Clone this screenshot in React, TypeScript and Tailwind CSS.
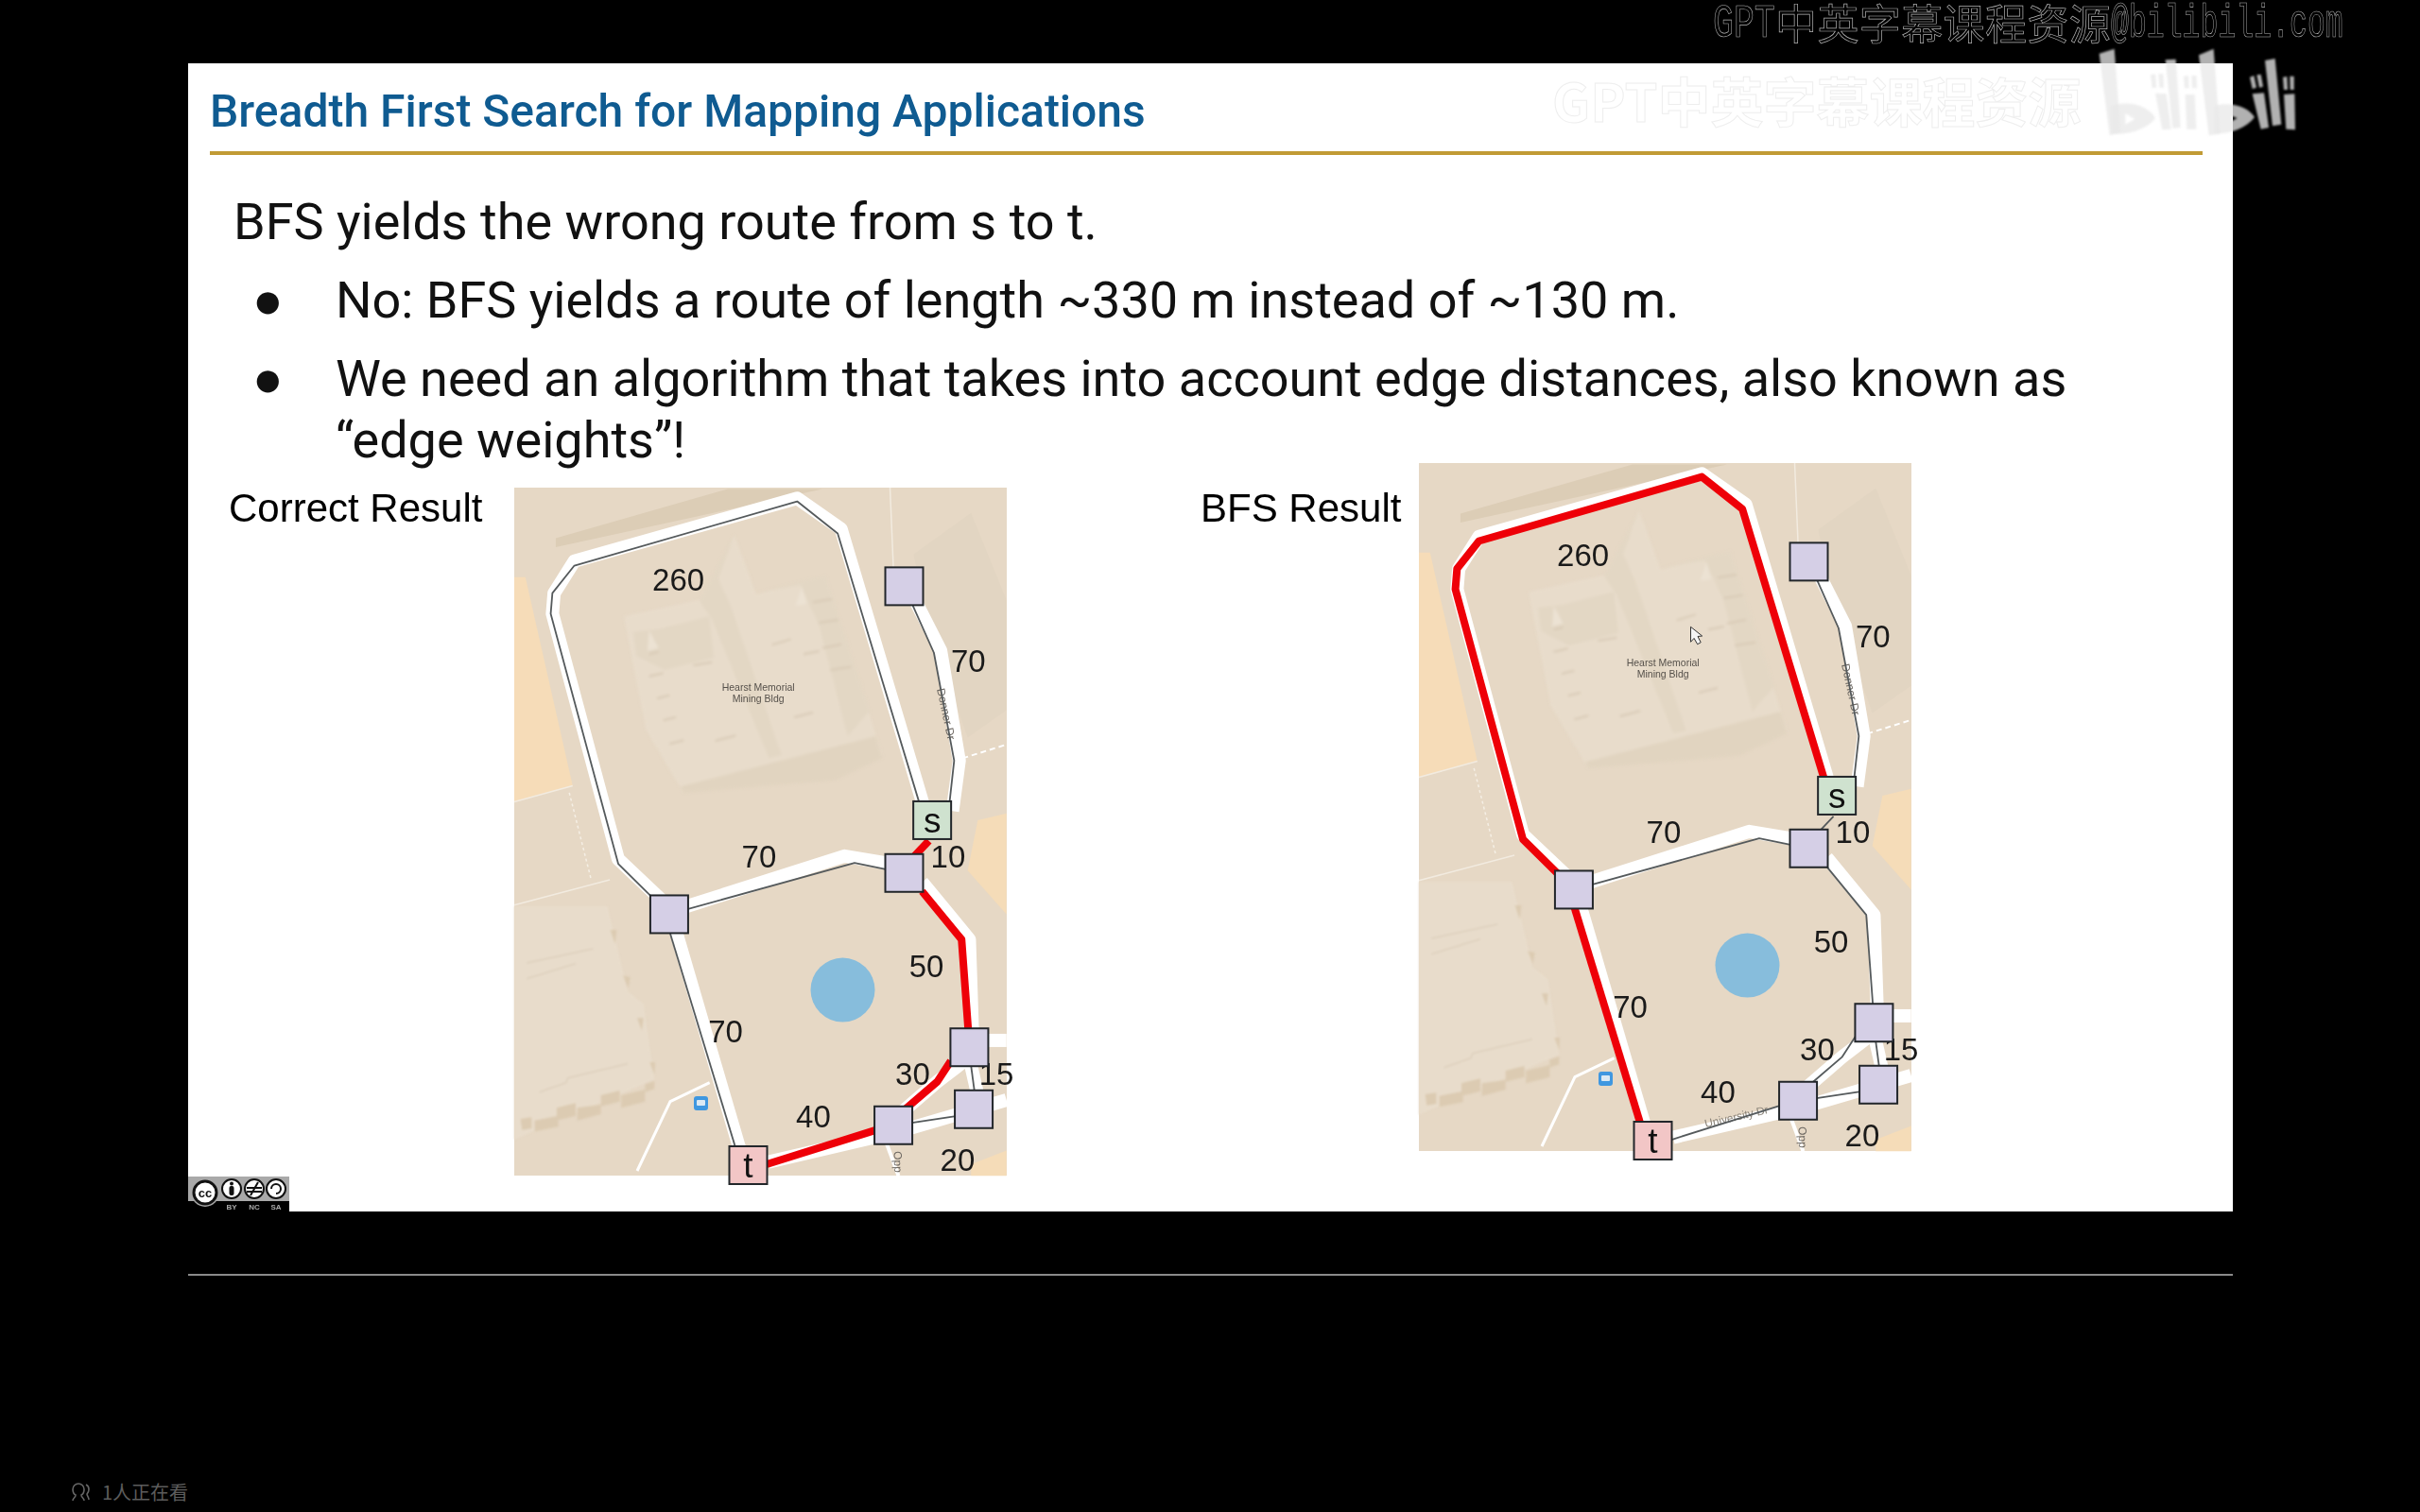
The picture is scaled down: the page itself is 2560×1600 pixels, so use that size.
import React from 'react';

type Pt = [number, number];

// map points were read off a crop, so convert them to px here
const X = (x: number) => (x - 67) / 2.8;
const Y = (y: number) => (y - 35) / 2.06;
const pts = (list: Pt[]) => list.map(([x, y]) => `${X(x)},${Y(y)}`).join(' ');
// same idea for the 3x crops of the two buildings
const hall = (list: Pt[]) => list.map(([x, y]) => `${96 + x / 3},${23 + y / 3}`).join(' ');
const hut = (list: Pt[]) => list.map(([x, y]) => `${x / 3},${433 + y / 3}`).join(' ');

const loop: Pt[] = [[526, 965], [375, 855], [175, 310], [180, 265], [245, 205], [905, 65], [1025, 135], [1270, 730]];
const topBranch: Pt[] = [[1222, 250], [1310, 395], [1370, 630], [1355, 730]];
const middle: Pt[] = [[526, 965], [1075, 853], [1222, 875]];
const sToMid: Pt[] = [[1295, 805], [1250, 840]];
const rightSide: Pt[] = [[1275, 915], [1392, 1020], [1412, 1220]];
const leftToT: Pt[] = [[526, 1000], [725, 1480]];
const thirty: Pt[] = [[1360, 1285], [1320, 1330], [1225, 1390]];
const forty: Pt[] = [[1140, 1435], [815, 1510]];
const twenty: Pt[] = [[1240, 1420], [1375, 1405]];
const fifteen: Pt[] = [[1420, 1295], [1430, 1350]];

const roads: Pt[][] = [
  [[526, 950], [375, 845], [180, 310], [185, 265], [245, 195], [905, 58], [1035, 125], [1280, 730]],
  [[1240, 260], [1330, 390], [1385, 630], [1365, 740]],
  [[526, 960], [1045, 838], [1222, 860]],
  [[1275, 895], [1415, 1020], [1425, 1240]],
  [[545, 1000], [740, 1490]],
  [[1400, 1285], [1320, 1330], [1210, 1400]],
  [[820, 1505], [1200, 1440], [1525, 1370]],
  [[1470, 1240], [1525, 1240]],
  [[1420, 1295], [1440, 1360]],
];

const numbers: { t: string; x: number; y: number }[] = [
  { t: '260', x: 553, y: 235 },
  { t: '70', x: 1412, y: 412 },
  { t: '70', x: 792, y: 838 },
  { t: '10', x: 1352, y: 838 },
  { t: '50', x: 1288, y: 1077 },
  { t: '70', x: 693, y: 1220 },
  { t: '30', x: 1247, y: 1312 },
  { t: '15', x: 1495, y: 1312 },
  { t: '40', x: 953, y: 1405 },
  { t: '20', x: 1380, y: 1500 },
];

const nodes: { x: number; y: number; fill: string; t?: string }[] = [
  { x: 1222, y: 250, fill: '#d5cfe6' },
  { x: 1222, y: 875, fill: '#d5cfe6' },
  { x: 526, y: 965, fill: '#d5cfe6' },
  { x: 1415, y: 1255, fill: '#d5cfe6' },
  { x: 1428, y: 1390, fill: '#d5cfe6' },
  { x: 1190, y: 1425, fill: '#d5cfe6' },
  { x: 1305, y: 760, fill: '#cfe2cf', t: 's' },
  { x: 760, y: 1512, fill: '#f2c6c6', t: 't' },
];

const hallLines: Pt[][] = [
  [[140, 530], [185, 520]], [[165, 600], [205, 590]], [[185, 670], [225, 660]], [[205, 745], [250, 733]],
  [[350, 735], [415, 718]], [[280, 495], [340, 485]], [[530, 430], [590, 412]], [[630, 460], [680, 450]],
  [[600, 660], [660, 645]], [[660, 295], [720, 285]], [[680, 360], [740, 350]], [[690, 440], [750, 428]],
  [[715, 510], [780, 500]], [[140, 460], [170, 452]],
];

const hutTiles: Pt[][] = [
  [[65, 710], [140, 695], [140, 730], [65, 745]],
  [[135, 670], [195, 655], [195, 695], [135, 710]],
  [[200, 670], [275, 660], [275, 690], [200, 710]],
  [[275, 630], [335, 615], [335, 650], [275, 665]],
  [[340, 630], [415, 612], [415, 650], [340, 670]],
  [[415, 595], [445, 585], [445, 610], [415, 620]],
  [[20, 705], [55, 700], [55, 735], [25, 740]],
  [[305, 105], [325, 105], [320, 150]],
  [[345, 250], [368, 255], [362, 290]],
  [[390, 385], [410, 385], [405, 425]],
  [[430, 525], [447, 525], [445, 565]],
];

const MapFigure: React.FC<{ bfs?: boolean }> = ({ bfs }) => {
  const line = (list: Pt[], on: boolean) => (
    <polyline
      points={pts(list)}
      fill="none"
      stroke={on ? '#ee0008' : '#555a5c'}
      strokeWidth={on ? 8 : 1.8}
      strokeLinejoin="round"
    />
  );

  return (
    <svg width={521} height={728} className="overflow-visible shrink-0">
      <rect width={521} height={728} fill="#e6d8c5" />
      <polygon points={pts([[67, 230], [100, 230], [240, 685], [67, 720]])} fill="#f6dcb8" />
      <polygon points={pts([[1440, 760], [1525, 745], [1525, 965], [1410, 870]])} fill="#f5dcb8" />
      <polygon points={pts([[1420, 1510], [1525, 1480], [1525, 1535], [1420, 1535]])} fill="#f5dcb8" />
      <polygon points={pts([[190, 165], [980, 38], [700, 38], [190, 145]])} fill="#dccdb6" />
      <polygon points={pts([[1250, 180], [1420, 90], [1525, 280], [1525, 520], [1410, 580], [1290, 330]])} fill="#e2d5c2" />

      {/* mining building */}
      <g className="blur-[1.5px]">
        <polygon points={hall([[60, 340], [330, 280], [410, 80], [480, 270], [700, 210], [880, 780], [250, 900], [130, 700]])} fill="#e8dccb" />
        <polygon points={hall([[90, 390], [170, 380], [330, 340], [345, 470], [190, 510], [100, 465]])} fill="#e3d7c4" />
        <polygon points={hall([[410, 80], [360, 220], [400, 310], [560, 780], [520, 790], [340, 350], [300, 290]])} fill="#e3d7c4" />
        <polygon points={hall([[480, 265], [700, 210], [840, 640], [770, 720], [680, 370], [620, 240]])} fill="#e3d7c4" />
        <polygon points={hall([[240, 880], [860, 720], [880, 790], [730, 860], [250, 900]])} fill="#e1d4c0" />
        <polygon points={hall([[140, 385], [170, 440], [135, 450]])} fill="#ece2d3" />
        <polygon points={hall([[625, 245], [640, 300], [605, 305]])} fill="#ece2d3" />
        {hallLines.map((l, i) => (
          <polyline key={i} points={hall(l)} fill="none" stroke="#d8cab6" strokeWidth={2} />
        ))}
      </g>

      {/* lower left building */}
      <g className="blur-[1px]">
        <polygon points={hut([[0, 30], [295, 30], [320, 130], [360, 300], [410, 340], [445, 580], [0, 770]])} fill="#e8dccb" />
        {hutTiles.map((p, i) => (
          <polygon key={i} points={hut(p)} fill="#dccbb2" />
        ))}
        <polyline points={hut([[40, 210], [250, 165]])} fill="none" stroke="#d8cab6" strokeWidth={1} />
        <polyline points={hut([[40, 260], [195, 212]])} fill="none" stroke="#d8cab6" strokeWidth={1} />
        <polyline points={hut([[80, 620], [165, 590], [170, 575], [360, 530]])} fill="none" stroke="#d8cab6" strokeWidth={1} />
      </g>

      {/* thin streets */}
      <polyline points={pts([[67, 945], [350, 890]])} fill="none" stroke="#f2ebe0" strokeWidth={1.5} />
      <polyline points={pts([[67, 720], [240, 685]])} fill="none" stroke="#f2ebe0" strokeWidth={1.5} />
      <polyline points={pts([[1180, 35], [1190, 210]])} fill="none" stroke="#f2ebe0" strokeWidth={1.5} />
      <polyline points={pts([[1395, 625], [1525, 595]])} fill="none" stroke="#fff" strokeWidth={2} strokeDasharray="6 4" />
      <polyline points={pts([[230, 700], [295, 890]])} fill="none" stroke="#f5efe5" strokeWidth={1.5} strokeDasharray="3 3" />
      <polyline points={hut([[390, 870], [495, 650], [620, 590]])} fill="none" stroke="#fff" strokeWidth={3} />
      <polyline points={pts([[1170, 1465], [1205, 1535]])} fill="none" stroke="#fff" strokeWidth={4} />

      {roads.map((r, i) => (
        <polyline key={i} points={pts(r)} fill="none" stroke="#fff" strokeWidth={14} strokeLinejoin="round" />
      ))}

      <circle cx={X(1040)} cy={Y(1130)} r={34} fill="#87bddc" />
      <rect x={190} y={644} width={15} height={15} rx={3} fill="#3f97e0" />
      <rect x={193} y={648} width={9} height={6} rx={1} fill="#dbe9f4" />

      <g fill="#55504a" fontFamily="'Liberation Sans', sans-serif" fontSize={10.5} textAnchor="middle">
        <text x={X(790)} y={Y(478)}>Hearst Memorial</text>
        <text x={X(790)} y={Y(502)}>Mining Bldg</text>
      </g>
      <text
        transform={`translate(${X(1335)} ${Y(530)}) rotate(78)`}
        fontFamily="'Liberation Sans', sans-serif"
        fontSize={12}
        fill="#6b6660"
        textAnchor="middle"
      >
        Donner Dr
      </text>
      <text
        transform={`translate(${X(1192)} ${Y(1505)}) rotate(88)`}
        fontFamily="'Liberation Sans', sans-serif"
        fontSize={12}
        fill="#6b6660"
        textAnchor="middle"
      >
        Opp
      </text>
      {bfs && (
        <text
          transform={`translate(${X(1010)} ${Y(1468)}) rotate(-13)`}
          fontFamily="'Liberation Sans', sans-serif"
          fontSize={12}
          fill="#8a8378"
          textAnchor="middle"
        >
          University Dr
        </text>
      )}

      {line(loop, !!bfs)}
      {line(topBranch, false)}
      {line(middle, false)}
      {line(sToMid, !bfs)}
      {line(rightSide, !bfs)}
      {line(leftToT, !!bfs)}
      {line(thirty, !bfs)}
      {line(forty, !bfs)}
      {line(twenty, false)}
      {line(fifteen, false)}

      {numbers.map((n, i) => (
        <text
          key={i}
          x={X(n.x)}
          y={Y(n.y) + 12}
          fontFamily="'Liberation Sans', sans-serif"
          fontSize={33}
          fill="#1a1a1a"
          textAnchor="middle"
        >
          {n.t}
        </text>
      ))}

      {nodes.map((n, i) => (
        <g key={i}>
          <rect x={X(n.x) - 20} y={Y(n.y) - 20} width={40} height={40} fill={n.fill} stroke="#22262a" strokeWidth={2} />
          {n.t && (
            <text
              x={X(n.x)}
              y={Y(n.y) + 13}
              fontFamily="'Liberation Sans', sans-serif"
              fontSize={37}
              fill="#111"
              textAnchor="middle"
            >
              {n.t}
            </text>
          )}
        </g>
      ))}

      {bfs && (
        <polygon
          points={`${X(872)},${Y(392)} ${X(872)},${Y(425)} ${X(882)},${Y(417)} ${X(892)},${Y(430)} ${X(902)},${Y(426)} ${X(893)},${Y(413)} ${X(906)},${Y(412)}`}
          fill="#f4f4f4"
          stroke="#333"
          strokeWidth={1}
        />
      )}
    </svg>
  );
};

const CcBadge: React.FC = () => (
  <svg viewBox="0 0 107 37" width={107} height={37} className="absolute left-0 bottom-0">
    <rect width={107} height={37} fill="#000" />
    <rect width={107} height={26} fill="#a9a9a9" />
    <circle cx={18} cy={17} r={15} fill="#a9a9a9" />
    <circle cx={18} cy={17} r={12} fill="#fff" stroke="#111" strokeWidth={3} />
    <text x={18} y={22} textAnchor="middle" fontFamily="'Liberation Sans', sans-serif" fontWeight={700} fontSize={13} fill="#111">cc</text>
    {[46, 70, 93].map((cx) => (
      <circle key={cx} cx={cx} cy={13} r={10} fill="#fff" stroke="#111" strokeWidth={2} />
    ))}
    <circle cx={46} cy={7.5} r={2} fill="#111" />
    <rect x={43.5} y={10} width={5} height={10} rx={2} fill="#111" />
    <path d="M62 12 H78 M62 16 H78 M74 6 L66 20" stroke="#111" strokeWidth={2} fill="none" />
    <path d="M88 13 a5 5 0 1 1 5 5" stroke="#111" strokeWidth={2} fill="none" />
    <g fontFamily="'Liberation Sans', sans-serif" fontWeight={700} fontSize={8} fill="#a9a9a9" textAnchor="middle">
      <text x={46} y={35}>BY</text>
      <text x={70} y={35}>NC</text>
      <text x={93} y={35}>SA</text>
    </g>
  </svg>
);

const BiliLogo: React.FC = () => (
  <svg viewBox="0 0 720 330" className="absolute left-[2200px] top-[40px] w-[240px] h-[110px] blur-[0.8px]">
    <g fill="rgba(232,232,232,0.76)">
      {/* b */}
      <polygon points="62,50 110,35 130,300 95,310" />
      <path fillRule="evenodd" d="M100 215 C170 195 225 225 240 255 C220 285 160 310 100 305 Z M145 240 L145 275 L175 258 Z" />
      {/* i */}
      <polygon points="225,118 240,115 244,158 230,160" />
      <polygon points="250,115 265,114 267,158 253,158" />
      <polygon points="240,176 275,178 290,290 262,292" />
      {/* l */}
      <polygon points="272,70 305,68 320,285 295,287" />
      {/* i */}
      <polygon points="330,122 345,120 347,160 333,160" />
      <polygon points="355,120 370,120 372,160 357,160" />
      <polygon points="335,180 365,180 370,290 340,290" />
      {/* b */}
      <polygon points="378,55 425,35 445,305 410,310" />
      <path fillRule="evenodd" d="M430 215 C490 200 540 225 555 252 C530 285 480 305 430 305 Z M482 248 L482 265 L500 255 Z" />
      {/* i */}
      <polygon points="540,125 553,120 561,158 548,162" />
      <polygon points="562,118 575,116 582,155 570,158" />
      <polygon points="548,178 585,175 600,285 575,290" />
      {/* l */}
      <polygon points="588,72 620,66 640,275 612,280" />
      {/* i */}
      <polygon points="645,125 658,123 660,165 648,165" />
      <polygon points="667,122 680,122 680,165 668,165" />
      <polygon points="648,180 682,178 684,292 655,290" />
    </g>
  </svg>
);

export default function App() {
  return (
    <div className="relative w-[2560px] h-[1600px] bg-black overflow-hidden pt-[67px] pl-[199px] font-['Roboto',sans-serif]">
      {/* slide */}
      <div className="relative w-[2163px] h-[1215px] bg-white blur-[0.6px] pl-[23px]">
        <div className="w-[2108px] h-[97px] border-b-4 border-[#c19b35] pt-[22px]">
          <h1 className="text-[48px] leading-[58px] font-medium text-[#0f5b91]">Breadth First Search for Mapping Applications</h1>
        </div>
        <div className="pl-[25px] pt-[38px] text-[54px] leading-[65px] text-[#111]">
          <p>BFS yields the wrong route from s to t.</p>
          <div className="flex mt-[18px]">
            <span className="w-[108px] pl-[20px]">●</span>
            <p>No: BFS yields a route of length ~330 m instead of ~130 m.</p>
          </div>
          <div className="flex mt-[18px]">
            <span className="w-[108px] pl-[20px]">●</span>
            <p className="w-[1960px]">We need an algorithm that takes into account edge distances, also known as “edge weights”!</p>
          </div>
        </div>
        <div className="flex items-start pl-[20px] mt-[-8px] font-['Liberation_Sans',sans-serif] text-[42px] leading-[50px] text-black">
          <div className="w-[302px] mt-[23px]">Correct Result</div>
          <div className="mt-[26px]">
            <MapFigure />
          </div>
          <div className="w-[231px] ml-[205px] mt-[23px]">BFS Result</div>
          <MapFigure bfs />
        </div>
        <CcBadge />
      </div>

      <div className="w-[2163px] h-[2px] bg-[#8a8a8a] mt-[66px]" />

      {/* video overlay */}
      <div className="absolute left-[1812px] top-0 flex items-center h-[46px] opacity-95 text-transparent [-webkit-text-stroke:0.7px_#bcbcbc] text-[44px] leading-[46px] font-['Noto_Sans_CJK_SC',sans-serif] whitespace-nowrap">
        <span className="inline-block w-[66px]"><span className="inline-block origin-left scale-x-[0.73] text-[50px] font-['Liberation_Mono',monospace]">GPT</span></span>
        <span className="tracking-[0.4px]">中英字幕课程资源</span>
        <span className="inline-block w-[245px]"><span className="inline-block origin-left scale-x-[0.63] text-[50px] font-['Liberation_Mono',monospace]">@bilibili.com</span></span>
      </div>
      <div className="absolute left-[1642px] top-[72px] text-white [-webkit-text-stroke:1px_#eeeeee] text-[56px] leading-[66px] font-bold font-['Noto_Sans_CJK_SC',sans-serif] whitespace-nowrap">
        GPT中英字幕课程资源
      </div>
      <BiliLogo />

      {/* viewer count */}
      <div className="absolute left-[74px] top-[1566px] flex items-center gap-[12px] text-[20px] leading-[26px] text-[#5c5c5c] font-['Noto_Sans_CJK_SC',sans-serif]">
        <svg width="22" height="22" viewBox="0 0 22 22" fill="none" stroke="#666" strokeWidth="1.6">
          <path d="M3 20c0-3 3-3 3-6-2-1-3-3-3-6a6 6 0 0 1 12 0c0 3-1 5-3 6 0 3 3 3 3 6" />
          <path d="M17 3c2 1 3 3 3 5 0 2-1 4-2 5 0 2 2 3 2 6" />
        </svg>
        <span>1人正在看</span>
      </div>
    </div>
  );
}
